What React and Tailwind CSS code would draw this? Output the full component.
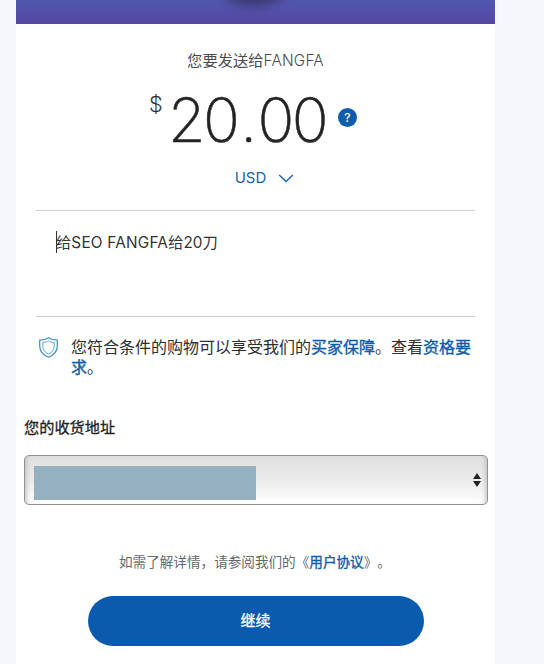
function Header() {
  return (
    <header className="relative h-6 overflow-hidden bg-linear-to-b from-[#5157ae] to-[#5646a2]">
      <div className="absolute -top-[70px] left-[201px] h-[70px] w-[74px] rounded-full bg-[#3f3c78] shadow-[0_0_10px_7px_#3e3b78]" />
    </header>
  );
}

function Amount() {
  return (
    <section className="flex flex-col items-center">
      <p className="mt-[25px] h-5 text-[15.3px] leading-5 whitespace-nowrap text-[#4a4b4d]">
        您要发送给<span className="font-[Inter] text-[15.3px] font-light tracking-[0.25px]">FANGFA</span>
      </p>
      <div className="mt-[19px] flex h-16 w-[213px] items-start font-[Inter] text-[#222324]">
        <span className="mt-[2px] w-[19px] text-[22px] leading-7 font-extralight [-webkit-text-stroke:0.3px]">$</span>
        <span className="w-[170px] text-[61px] leading-[65px] font-extralight tracking-[-2.6px] [-webkit-text-stroke:0.5px]">
          20<span className="mx-[3px]">.</span>00
        </span>
        <span className="mt-5 flex size-[19px] shrink-0 items-center justify-center rounded-full bg-[#0f5cad] text-[12px] font-medium text-white">
          ?
        </span>
      </div>
      <button className="mt-4 ml-[18px] flex h-5 items-center gap-[12px] font-[Inter] text-[15px] leading-5 text-[#1a60ae]">
        USD
        <svg className="size-4" viewBox="0 0 16 16" fill="none" stroke="currentColor" strokeWidth="1.3">
          <path d="M1.2 5 L8 11.5 L14.8 5" />
        </svg>
      </button>
    </section>
  );
}

export default function App() {
  return (
    <div className="h-[664px] w-[544px] overflow-hidden bg-[#f5f7fa] font-['Noto_Sans_CJK_SC',sans-serif] [text-spacing-trim:space-all]">
      <main className="ml-4 h-full w-[479px] bg-white">
        <Header />
        <Amount />
        <div className="mt-[22px] mr-[20px] ml-5 h-[107px] border-y border-[#cfcfcf] pt-[20px] pl-5">
          <p className="flex h-[22px] w-fit items-center border-l border-[#333] text-[15.3px] leading-[22px] whitespace-pre text-[#333]">
            <span className="-mt-[2px] -ml-px">给</span>
            <span className="mt-[2px] font-[Inter] text-[15.3px] tracking-[0.25px]">SEO FANGFA</span>
            <span className="-mt-[2px]">给</span>
            <span className="mt-[2px] font-[Inter] text-[15.3px]">20</span>
            <span className="-mt-[2px]">刀</span>
          </p>
        </div>
        <section className="mt-[21px] ml-[22.5px] flex">
          <svg className="-mt-px h-[21px] w-[19px] shrink-0" viewBox="0 0 19 21" fill="none" stroke="#3b8fc4">
            <path strokeWidth="1.2" d="M9.5 .8C7.2 2.4 4.2 3.1 .7 3.1V9c0 5.2 3.4 9 8.8 11.2 5.4-2.2 8.8-6 8.8-11.2V3.1C14.8 3.1 11.8 2.4 9.5.8Z" />
            <path strokeWidth=".8" d="M9.5 4C8 4.9 6.2 5.4 3.8 5.5V9c0 3.8 2.2 6.4 5.7 8 3.5-1.6 5.7-4.2 5.7-8V5.5C12.8 5.4 11 4.9 9.5 4Z" />
          </svg>
          <p className="-mt-[2px] ml-[13.5px] h-[42px] w-[404px] text-[16px] leading-5 text-[#2c2e2f]">
            您符合条件的购物可以享受我们的<a className="text-[#115baa] [-webkit-text-stroke:0.35px]">买家保障</a>。查看<a className="text-[#115baa] [-webkit-text-stroke:0.35px]">资格要求</a>。
          </p>
        </section>
        <h2 className="mt-[38px] ml-2 h-5 text-[15.2px] leading-5 text-[#222] [-webkit-text-stroke:0.3px]">您的收货地址</h2>
        <div className="mt-[19px] ml-2 flex h-[50px] w-[463.5px] items-center justify-between rounded-[5px] border border-[#929292] bg-linear-to-b from-[#dfdfdf] via-[#ebebeb] to-white pr-[6px] pl-[9.4px] shadow-[inset_5px_0_5px_-4px_#bbb,inset_-5px_0_5px_-4px_#bbb]">
          <div className="mt-[5px] h-[34px] w-[222px] bg-[#95b1c0]" />
          <svg className="h-4 w-2" viewBox="0 0 8 16" fill="#222">
            <path d="M4 1 8 7H0ZM0 9H8L4 15Z" />
          </svg>
        </div>
        <p className="mt-[46px] ml-[103px] h-5 text-[13.6px] leading-5 whitespace-nowrap text-[#67696c]">
          如需了解详情，请参阅我们的《<a className="text-[#115baa] [-webkit-text-stroke:0.35px]">用户协议</a>》。
        </p>
        <button className="mt-[25px] ml-[71.5px] flex h-[50px] w-[336px] items-center justify-center rounded-full bg-[#0a5aad] pb-[2px] text-[15px] text-white [-webkit-text-stroke:0.3px]">
          继续
        </button>
      </main>
    </div>
  );
}
